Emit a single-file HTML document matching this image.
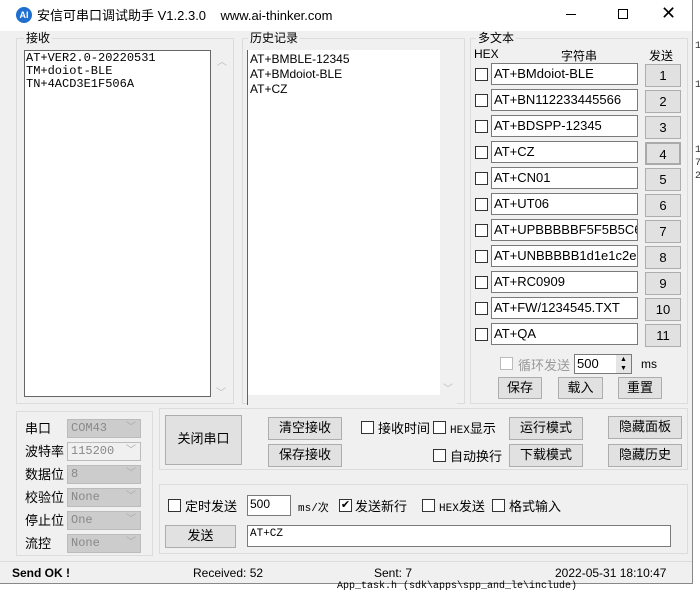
<!DOCTYPE html>
<html><head><meta charset="utf-8"><style>
*{box-sizing:border-box;margin:0;padding:0}
body{width:700px;height:591px;background:#fff;position:relative;overflow:hidden;font-family:"Liberation Sans","Noto Sans CJK SC",sans-serif;font-size:12px;color:#000}
.a{position:absolute}
.win{left:0;top:0;width:693px;height:584px;background:#f0f0f0;border-right:1px solid #888;border-bottom:1px solid #888}
.title{left:0;top:0;width:692px;height:31px;background:#fff}
.grp{border:1px solid #dcdcdc}
.lbl{background:#f0f0f0;padding:0 2px;font-size:12px;line-height:14px}
.btn{background:#e1e1e1;border:1px solid #adadad;text-align:center;font-size:13px}
.inp{background:#fff;border:1px solid #7a7a7a;font-size:13px;padding-left:2px;line-height:20px;white-space:nowrap;overflow:hidden}
.cb{width:13px;height:13px;border:1px solid #333;background:#fff}
.cmb{background:#ccc;border:1px solid #bbb;color:#888;font-family:"Liberation Mono",monospace;font-size:12px;padding-left:3px;line-height:17px}
.cmb:after{content:"﹀";position:absolute;right:4px;top:0;color:#aaa;font-size:10px}
.mono{font-family:"Liberation Mono","Noto Sans CJK SC",monospace}
</style></head><body>
<div class="a win"></div>
<div class="a title"></div>
<div class="a" style="left:16px;top:7px;width:16px;height:16px;border-radius:50%;background:#1e6fd0;color:#fff;font-size:9px;text-align:center;line-height:16px;font-weight:bold">AI</div>
<div class="a" style="left:37px;top:5px;font-size:13px">安信可串口调试助手 V1.2.3.0 &nbsp;&nbsp;&nbsp;www.ai-thinker.com</div>
<div class="a" style="left:566px;top:14px;width:10px;height:1px;background:#000"></div>
<div class="a" style="left:618px;top:9px;width:10px;height:10px;border:1px solid #000"></div>
<div class="a" style="left:661px;top:3px;font-size:18px;font-weight:300">✕</div>

<!-- receive -->
<div class="a grp" style="left:16px;top:38px;width:218px;height:366px"></div>
<div class="a lbl" style="left:24px;top:31px">接收</div>
<div class="a" style="left:24px;top:50px;width:187px;height:347px;background:#fff;border:1px solid #666"></div>
<div class="a mono" style="left:26px;top:52px;font-size:12px;line-height:13px">AT+VER2.0-20220531<br>TM+doiot-BLE<br>TN+4ACD3E1F506A</div>
<div class="a" style="left:217px;top:53px;color:#bbb;font-size:10px">︿</div>
<div class="a" style="left:216px;top:384px;color:#bbb;font-size:10px">﹀</div>

<!-- history -->
<div class="a grp" style="left:242px;top:38px;width:223px;height:366px"></div>
<div class="a lbl" style="left:248px;top:31px">历史记录</div>
<div class="a" style="left:247px;top:50px;width:210px;height:355px;background:#fff;border-left:1px solid #1e6fd0"></div>
<div class="a" style="left:440px;top:50px;width:17px;height:345px;background:#f0f0f0"></div>
<div class="a" style="left:248px;top:395px;width:209px;height:10px;background:#f0f0f0"></div>
<div class="a" style="left:250px;top:52px;font-size:12px;line-height:15px">AT+BMBLE-12345<br>AT+BMdoiot-BLE<br>AT+CZ</div>
<div class="a" style="left:443px;top:380px;color:#bbb;font-size:10px">﹀</div>

<!-- multi -->
<div class="a grp" style="left:470px;top:38px;width:218px;height:366px"></div>
<div class="a lbl" style="left:476px;top:31px">多文本</div>
<div class="a" style="left:474px;top:47px;font-size:12px">HEX</div>
<div class="a" style="left:561px;top:47px;font-size:12px">字符串</div>
<div class="a" style="left:649px;top:47px;font-size:12px">发送</div>
<div id="rows"></div>
<div class="a cb" style="left:500px;top:357px;border-color:#bbb"></div>
<div class="a" style="left:518px;top:355px;color:#999;font-size:13px">循环发送</div>
<div class="a inp" style="left:574px;top:354px;width:58px;height:20px;line-height:18px">500</div>
<div class="a" style="left:616px;top:355px;width:15px;height:18px;background:#e5e5e5;font-size:7px;text-align:center;line-height:9px">▲<br>▼</div>
<div class="a" style="left:641px;top:357px;font-size:12px">ms</div>
<div class="a btn" style="left:498px;top:377px;width:44px;height:22px;line-height:19px">保存</div>
<div class="a btn" style="left:558px;top:377px;width:45px;height:22px;line-height:19px">载入</div>
<div class="a btn" style="left:618px;top:377px;width:44px;height:22px;line-height:19px">重置</div>

<!-- serial settings -->
<div class="a grp" style="left:16px;top:411px;width:137px;height:145px"></div>
<div class="a" style="left:25px;top:417px;font-size:13px;line-height:23px">串口<br>波特率<br>数据位<br>校验位<br>停止位<br>流控</div>
<div class="a cmb" style="left:67px;top:419px;width:74px;height:19px">COM43</div>
<div class="a cmb" style="left:67px;top:442px;width:74px;height:19px;background:#f0f0f0">115200</div>
<div class="a cmb" style="left:67px;top:465px;width:74px;height:19px">8</div>
<div class="a cmb" style="left:67px;top:488px;width:74px;height:19px">None</div>
<div class="a cmb" style="left:67px;top:511px;width:74px;height:19px">One</div>
<div class="a cmb" style="left:67px;top:534px;width:74px;height:19px">None</div>

<div class="a grp" style="left:159px;top:408px;width:529px;height:62px"></div>
<div class="a btn" style="left:165px;top:415px;width:77px;height:50px;line-height:46px">关闭串口</div>
<div class="a btn" style="left:268px;top:417px;width:74px;height:23px;line-height:20px">清空接收</div>
<div class="a btn" style="left:268px;top:444px;width:74px;height:23px;line-height:20px">保存接收</div>
<div class="a cb" style="left:361px;top:421px"></div><div class="a" style="left:378px;top:418px;font-size:13px">接收时间</div>
<div class="a cb" style="left:433px;top:421px"></div><div class="a" style="left:450px;top:418px;font-size:13px"><span class="mono" style="font-size:11px">HEX</span>显示</div>
<div class="a cb" style="left:433px;top:449px"></div><div class="a" style="left:450px;top:446px;font-size:13px">自动换行</div>
<div class="a btn" style="left:509px;top:417px;width:74px;height:23px;line-height:20px">运行模式</div>
<div class="a btn" style="left:509px;top:444px;width:74px;height:23px;line-height:20px">下载模式</div>
<div class="a btn" style="left:608px;top:416px;width:74px;height:23px;line-height:20px">隐藏面板</div>
<div class="a btn" style="left:608px;top:444px;width:74px;height:23px;line-height:20px">隐藏历史</div>

<div class="a grp" style="left:159px;top:484px;width:529px;height:70px"></div>
<div class="a cb" style="left:168px;top:499px"></div><div class="a" style="left:185px;top:496px;font-size:13px">定时发送</div>
<div class="a inp" style="left:247px;top:495px;width:44px;height:21px;line-height:17px;font-size:12px">500</div>
<div class="a mono" style="left:298px;top:499px;font-size:11px">ms/次</div>
<div class="a cb" style="left:339px;top:499px;font-size:11px;line-height:11px;text-align:center">✔</div><div class="a" style="left:355px;top:496px;font-size:13px">发送新行</div>
<div class="a cb" style="left:422px;top:499px"></div><div class="a" style="left:439px;top:496px;font-size:13px"><span class="mono" style="font-size:11px">HEX</span>发送</div>
<div class="a cb" style="left:492px;top:499px"></div><div class="a" style="left:509px;top:496px;font-size:13px">格式输入</div>
<div class="a btn" style="left:165px;top:525px;width:71px;height:23px;line-height:20px">发送</div>
<div class="a inp mono" style="left:247px;top:525px;width:424px;height:22px;line-height:16px;font-size:11px">AT+CZ</div>

<!-- status -->
<div class="a" style="left:0;top:561px;width:692px;height:1px;background:#dcdcdc"></div>
<div class="a" style="left:12px;top:566px;font-size:12px;font-weight:bold">Send OK !</div>
<div class="a" style="left:193px;top:566px;font-size:12px">Received: 52</div>
<div class="a" style="left:374px;top:566px;font-size:12px">Sent: 7</div>
<div class="a" style="left:555px;top:566px;font-size:12px">2022-05-31 18:10:47</div>
<div class="a mono" style="left:337px;top:582px;font-size:10px;line-height:10px">App_task.h (sdk\apps\spp_and_le\include)</div>
<div class="a mono" style="left:695px;top:40px;font-size:10px;line-height:13px;color:#333">1<br><br><br>1<br><br><br><br><br>1<br>7<br>2</div>
<script>
var v=["AT+BMdoiot-BLE","AT+BN112233445566","AT+BDSPP-12345","AT+CZ","AT+CN01","AT+UT06","AT+UPBBBBBF5F5B5C6F","AT+UNBBBBB1d1e1c2e1e","AT+RC0909","AT+FW/1234545.TXT","AT+QA"],h="";
for(var i=0;i<11;i++){var y=63+i*26;
h+='<div class="a cb" style="left:475px;top:'+(y+5)+'px"></div><div class="a inp" style="left:491px;top:'+y+'px;width:147px;height:22px">'+v[i]+'</div><div class="a btn" style="left:645px;top:'+(y+1)+'px;width:36px;height:23px;line-height:22px;'+(i==3?'border:2px solid #aaa;':'')+'">'+(i+1)+'</div>';}
document.getElementById("rows").outerHTML=h;
</script>
</body></html>
